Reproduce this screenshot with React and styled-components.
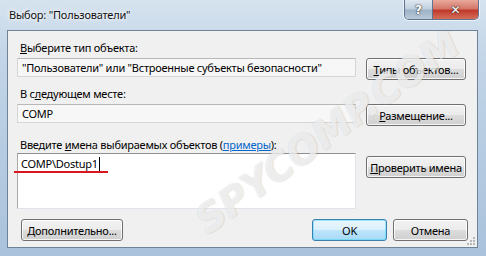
import React from "react";
import styled, { createGlobalStyle } from "styled-components";

const Global = createGlobalStyle`
  html, body { margin: 0; padding: 0; background: #b9cde2; }
  body { font-family: "Segoe UI", "Noto Sans", "Open Sans", sans-serif; }
`;

const Window = styled.div`
  position: relative;
  width: 486px;
  height: 256px;
  box-sizing: border-box;
  padding: 0 8px 8px 7px;
  display: flex;
  flex-direction: column;
  overflow: hidden;
  background: linear-gradient(180deg, #d6e3ef 0%, #c4d6e8 20%, #b5cbe1 60%, #aac2dc 100%);
`;

const TitleBar = styled.div`
  height: 30px;
  display: flex;
  align-items: flex-start;
  justify-content: space-between;
`;

const Title = styled.div`
  padding: 7px 0 0 2px;
  font-size: 11px;
  letter-spacing: -0.2px;
  color: #111;
  text-shadow: 0 0 6px rgba(255, 255, 255, 0.95), 0 0 3px rgba(255, 255, 255, 0.9);
`;

const Controls = styled.div`
  display: flex;
  margin-right: -1px;
  border: 1px solid #5e7390;
  border-top: none;
  border-radius: 0 0 5px 5px;
  overflow: hidden;
  box-shadow: 0 0 0 1px rgba(255, 255, 255, 0.6);
`;

const CtrlBtn = styled.div`
  height: 19px;
  width: ${(p) => p.$w}px;
  display: flex;
  align-items: center;
  justify-content: center;
  box-sizing: border-box;
  color: #fff;
  font-family: "DejaVu Sans", sans-serif;
  font-weight: bold;
  font-size: 12px;
  text-shadow: 0 0 2px #333, 0 0 1px #222;
  background: ${(p) =>
    p.$close
      ? "linear-gradient(180deg, #e9a99d 0%, #d47869 45%, #c0392b 55%, #d4705a 100%)"
      : "linear-gradient(180deg, #dfe8f1 0%, #c1d0de 45%, #9fb3c7 55%, #b8c9da 100%)"};
  & + & { border-left: 1px solid #5e7390; }
`;

const Client = styled.div`
  flex: 1;
  position: relative;
  overflow: hidden;
  background: #f0f0f0;
  border: 1px solid #6f8398;
  padding: 9px 11px 0 9px;
  display: flex;
  flex-direction: column;
  font-size: 11px;
  letter-spacing: -0.25px;
  color: #000;
`;

const Label = styled.div`
  padding-left: 3px;
  line-height: 15px;
  height: 15px;
  margin-top: ${(p) => p.$mt || 0}px;
  white-space: nowrap;
`;

const Row = styled.div`
  display: flex;
  align-items: flex-start;
  gap: 10px;
  margin-top: ${(p) => p.$mt || 0}px;
`;

const ReadField = styled.div`
  flex: 1;
  height: 19px;
  box-sizing: border-box;
  background: #f7f7f7;
  border: 1px solid #d6d6d6;
  border-top-color: #b8b8b8;
  padding: 0 4px;
  line-height: 17px;
  white-space: nowrap;
  overflow: hidden;
`;

const TextArea = styled.div`
  position: relative;
  flex: 1;
  height: 56px;
  box-sizing: border-box;
  background: #fff;
  border: 1px solid #e2e3ea;
  border-top-color: #8e8f8f;
  border-left-color: #a9a9a9;
  padding: 2px 3px;
  line-height: 16px;
`;

const Caret = styled.span`
  display: inline-block;
  width: 1px;
  height: 14px;
  background: #000;
  vertical-align: -3px;
  margin-left: 1px;
`;

const Button = styled.div`
  width: ${(p) => p.$w || 100}px;
  height: 22px;
  margin-top: ${(p) => p.$mt || 0}px;
  box-sizing: border-box;
  display: flex;
  align-items: center;
  justify-content: center;
  border-radius: 3px;
  white-space: nowrap;
  border: 1px solid ${(p) => (p.$primary ? "#3c7fb1" : "#707070")};
  box-shadow: inset 0 0 0 1px ${(p) => (p.$primary ? "rgba(72,215,251,0.5)" : "rgba(255,255,255,0.8)")};
  background: ${(p) =>
    p.$primary
      ? "linear-gradient(180deg, #eaf6fd 0%, #d9f0fc 50%, #bee6fd 50%, #a7d9f5 100%)"
      : "linear-gradient(180deg, #f2f2f2 0%, #ebebeb 50%, #dddddd 50%, #cfcfcf 100%)"};
`;

const Side = styled.div`
  width: 100px;
  display: flex;
  flex-direction: column;
`;

const Footer = styled.div`
  display: flex;
  align-items: center;
  margin-top: 10px;
  padding-left: 4px;
`;

const Spacer = styled.div`
  flex: 1;
`;

const FooterButtons = styled.div`
  display: flex;
  gap: 6px;
  margin-right: -2px;
`;

const Link = styled.span`
  color: #0066cc;
  text-decoration: underline;
`;

const RedMark = styled.div`
  position: absolute;
  left: 6px;
  top: 140px;
  width: 94px;
  height: 2px;
  background: #d6171d;
`;

const Grip = styled.svg`
  position: absolute;
  right: 1px;
  bottom: 1px;
`;

const Watermark = styled.div`
  position: absolute;
  left: 192px;
  top: 170px;
  line-height: 48px;
  transform: rotate(-36deg);
  transform-origin: left center;
  font-family: "DejaVu Sans", sans-serif;
  font-weight: bold;
  font-style: italic;
  font-size: 39px;
  color: rgba(255, 255, 255, 0.7);
  text-shadow: 0 0 1px rgba(110, 110, 110, 0.3), 1px 1px 1px rgba(150, 150, 150, 0.15);
  pointer-events: none;
  white-space: nowrap;
`;

export default function App() {
  return (
    <>
      <Global />
      <Window>
        <TitleBar>
          <Title>Выбор: "Пользователи"</Title>
          <Controls>
            <CtrlBtn $w={27}>?</CtrlBtn>
            <CtrlBtn $w={46} $close>✕</CtrlBtn>
          </Controls>
        </TitleBar>
        <Client>
          <Label>
            <u>В</u>ыберите тип объекта:
          </Label>
          <Row $mt={3}>
            <ReadField>"Пользователи" или "Встроенные субъекты безопасности"</ReadField>
            <Button>
              <span>
                <u>Т</u>ипы объектов...
              </span>
            </Button>
          </Row>
          <Label $mt={6}>
            В с<u>л</u>едующем месте:
          </Label>
          <Row $mt={3}>
            <ReadField>COMP</ReadField>
            <Button>
              <span>
                <u>Р</u>азмещение...
              </span>
            </Button>
          </Row>
          <Label $mt={11}>
            Введите <u>и</u>мена выбираемых объектов (<Link>примеры</Link>):
          </Label>
          <Row $mt={1}>
            <TextArea>
              COMP\Dostup1
              <Caret />
            </TextArea>
            <Side>
              <Button $mt={3}>
                <span>
                  <u>П</u>роверить имена
                </span>
              </Button>
            </Side>
          </Row>
          <Footer>
            <Button $w={102}>
              <span>
                <u>Д</u>ополнительно...
              </span>
            </Button>
            <Spacer />
            <FooterButtons>
              <Button $w={75} $primary>
                OK
              </Button>
              <Button $w={75}>Отмена</Button>
            </FooterButtons>
          </Footer>
          <RedMark />
          <Watermark>SPYCOMP.COM</Watermark>
          <Grip width="10" height="10" viewBox="0 0 10 10">
            {[
              [8, 2],
              [8, 5],
              [5, 5],
              [8, 8],
              [5, 8],
              [2, 8],
            ].map(([x, y]) => (
              <rect key={`${x}-${y}`} x={x - 1} y={y - 1} width="2" height="2" fill="#b8b8b8" />
            ))}
          </Grip>
        </Client>
      </Window>
    </>
  );
}
